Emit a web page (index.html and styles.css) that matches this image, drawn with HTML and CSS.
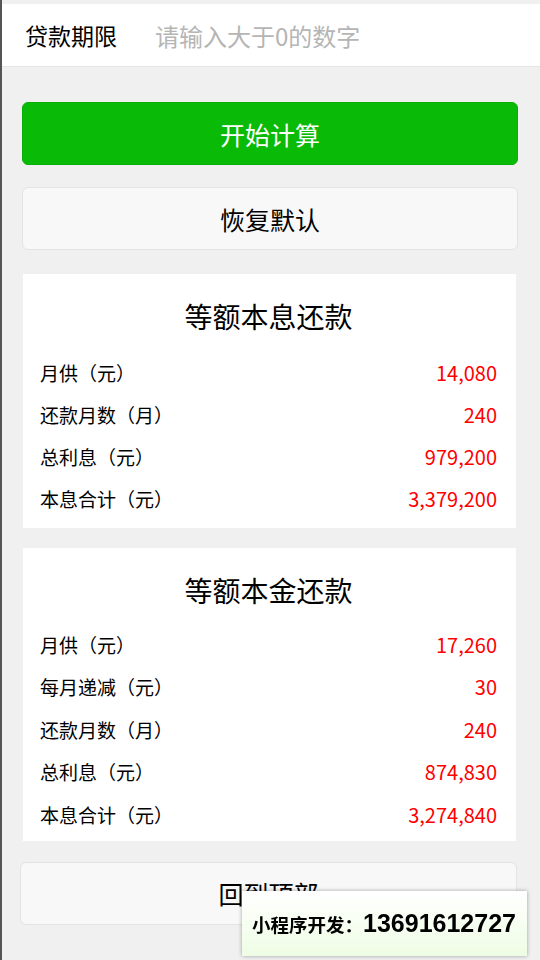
FILE: index.html
```html
<!DOCTYPE html>
<html lang="zh-CN">
<head>
  <meta charset="UTF-8">
  <meta name="viewport" content="width=device-width, initial-scale=1.0">
  <title>房贷计算器</title>
  <link rel="stylesheet" href="styles.css">
</head>
<body>
  <div class="container">
    <div class="field">
      <span class="field-label">贷款期限</span>
      <input class="field-input" type="text" placeholder="请输入大于0的数字">
    </div>
    <div class="actions">
      <a class="btn btn-primary" href="javascript:;">开始计算</a>
      <a class="btn btn-default" href="javascript:;">恢复默认</a>
    </div>
    <div class="card">
      <div class="card-title">等额本息还款</div>
      <div class="row"><span>月供（元）</span><span class="num">14,080</span></div>
      <div class="row"><span>还款月数（月）</span><span class="num">240</span></div>
      <div class="row"><span>总利息（元）</span><span class="num">979,200</span></div>
      <div class="row"><span>本息合计（元）</span><span class="num">3,379,200</span></div>
    </div>
    <div class="card card-last">
      <div class="card-title">等额本金还款</div>
      <div class="row"><span>月供（元）</span><span class="num">17,260</span></div>
      <div class="row"><span>每月递减（元）</span><span class="num">30</span></div>
      <div class="row"><span>还款月数（月）</span><span class="num">240</span></div>
      <div class="row"><span>总利息（元）</span><span class="num">874,830</span></div>
      <div class="row"><span>本息合计（元）</span><span class="num">3,274,840</span></div>
    </div>
    <a class="btn btn-default btn-top" href="javascript:;">回到顶部</a>
  </div>
  <div class="ad"><span class="ad-label">小程序开发：</span><span class="ad-phone">13691612727</span></div>
</body>
</html>
```

FILE: styles.css
```css
* {
  margin: 0;
  padding: 0;
  box-sizing: border-box;
}
html,
body {
  width: 100%;
  height: 100%;
}
body {
  background: #f0f0f0;
  border-left: 2px solid #555;
  font-family: "Noto Sans CJK SC", sans-serif;
  color: #000;
}
.container {
  padding-top: 4px;
  padding-bottom: 40px;
}
.field {
  display: flex;
  align-items: center;
  height: 63px;
  padding-left: 23px;
  background: #fff;
  border-bottom: 1px solid #e5e5e5;
}
.field-label {
  font-size: 23px;
  width: 130px;
}
.field-input {
  flex: 1;
  border: none;
  outline: none;
  font-family: inherit;
  font-size: 24px;
  background: transparent;
}
.field-input::placeholder {
  color: #b5b5b5;
}
.actions {
  padding: 35px 22px 0 20px;
}
a {
  text-decoration: none;
}
.btn {
  display: flex;
  align-items: center;
  justify-content: center;
  height: 63px;
  border-radius: 6px;
  font-size: 25px;
}
.btn-primary {
  background: #09bb07;
  border: 1px solid #08b006;
  color: #fff;
}
.btn-default {
  margin-top: 22px;
  background: #f8f8f9;
  border: 1px solid #e3e3e3;
  color: #000;
}
.card {
  margin: 24px 24px 0 21px;
  padding: 24px 19px 9px 17px;
  background: #fff;
}
.card + .card {
  margin-top: 20px;
}
.card-last {
  padding-bottom: 5px;
}
.card-title {
  height: 36px;
  line-height: 36px;
  margin-bottom: 17px;
  text-align: center;
  font-size: 28px;
}
.card-last .card-title {
  margin-bottom: 15px;
}
.row {
  display: flex;
  justify-content: space-between;
  align-items: center;
  height: 42px;
  font-size: 19px;
}
.card-last .row {
  height: 42.5px;
}
.num {
  color: #ff0000;
  font-size: 20px;
}
.btn-top {
  margin: 21px 23px 0 18px;
}
.ad {
  position: fixed;
  right: 13px;
  bottom: 4px;
  width: 285px;
  height: 65px;
  display: flex;
  align-items: center;
  padding-left: 10px;
  background: linear-gradient(#ffffff, #eefde4);
  box-shadow: 0 0 4px rgba(0, 0, 0, 0.35);
  font-family: "Liberation Sans", "Noto Sans CJK SC", sans-serif;
  font-weight: bold;
}
.ad-label {
  font-size: 18.5px;
}
.ad-phone {
  font-size: 25px;
}
```
